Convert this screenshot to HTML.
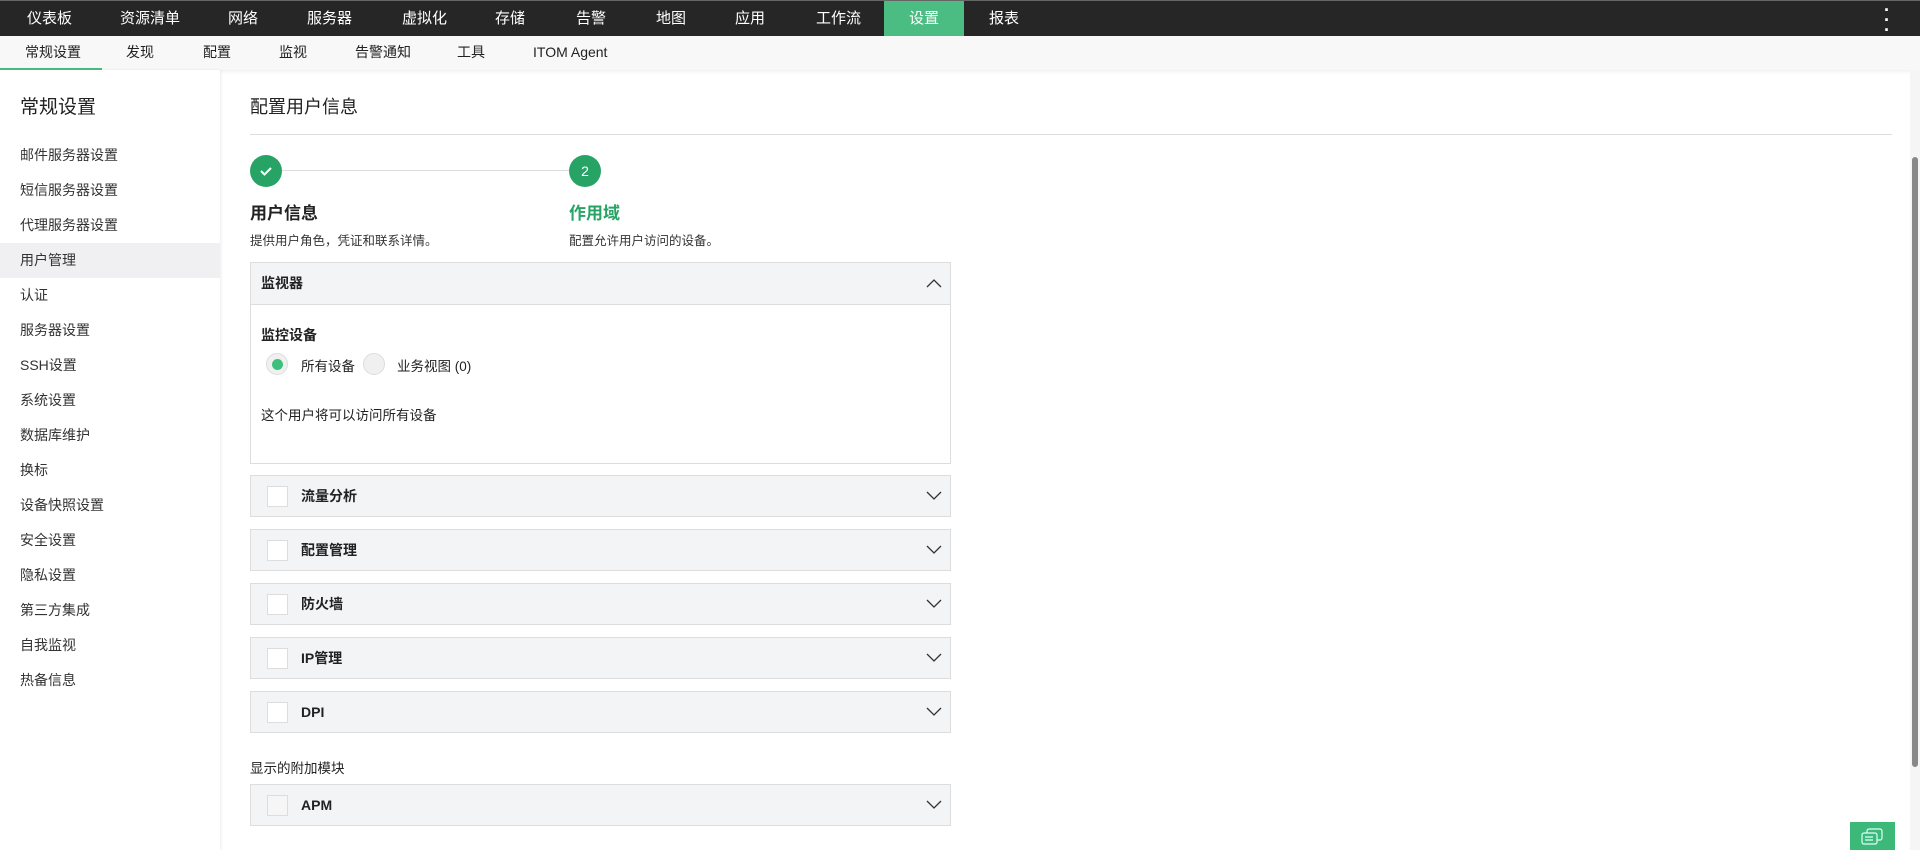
<!DOCTYPE html>
<html><head><meta charset="utf-8"><style>
*{box-sizing:border-box;margin:0;padding:0}
body{width:1920px;height:850px;overflow:hidden;background:#fff;font-family:"Liberation Sans","Noto Sans CJK SC",sans-serif;color:#222;position:relative}
.top{position:absolute;left:0;top:0;width:1920px;height:36px;background:#262626;border-top:1px solid #666}
.top span{position:absolute;top:0;line-height:35px;color:#fff;font-size:15px}
.top .act{background:#4bbd82;width:80px;left:884px;text-align:center}
.sub{position:absolute;left:0;top:36px;width:1920px;height:34px;background:#f8f8f8;box-shadow:0 2px 3px rgba(0,0,0,.06)}
.sub span{position:absolute;top:0;line-height:32px;font-size:14px;color:#222}
.sub .ul{position:absolute;left:0;top:32px;width:102px;height:3px;background:#4bbd82}
.side{position:absolute;left:0;top:70px;width:220px;height:780px;background:#fff;box-shadow:1px 0 3px rgba(0,0,0,.08)}
.side h2{position:absolute;left:20px;top:22px;font-size:19px;font-weight:normal;color:#222}
.side div{position:absolute;left:0;width:220px;height:35px;line-height:35px;padding-left:20px;font-size:14px;color:#333}
.side .sel{background:#f0f0f2}
.h1{position:absolute;left:250px;top:93px;font-size:18px;color:#222}
.hr{position:absolute;left:250px;top:134px;width:1642px;height:1px;background:#ddd}
.circ{position:absolute;width:32px;height:32px;border-radius:50%;background:#27a465;color:#fff;text-align:center;line-height:32px;font-size:14px}
.line{position:absolute;left:282px;top:170px;width:288px;height:1px;background:#ddd}
.st{position:absolute;font-size:17px;font-weight:bold}
.sd{position:absolute;font-size:12.5px;color:#333}
.panel{position:absolute;left:250px;width:701px;border:1px solid #ddd;background:#f3f4f6}
.panel .t{position:absolute;left:50px;top:0;font-size:14px;font-weight:bold}
.panel .cb{position:absolute;left:16px;top:10px;width:21px;height:21px;background:#fff;border:1px solid #ddd}
.chev{position:absolute;left:675px;top:15px;width:16px;height:10px}
.sb{position:absolute;left:1910px;top:70px;width:10px;height:780px;background:#f5f5f5}
.thumb{position:absolute;left:1912px;top:157px;width:6px;height:610px;background:#888;border-radius:3px}
</style></head><body>
<div class="top">
<span style="left:27px">仪表板</span><span style="left:120px">资源清单</span><span style="left:228px">网络</span><span style="left:307px">服务器</span><span style="left:402px">虚拟化</span><span style="left:495px">存储</span><span style="left:576px">告警</span><span style="left:656px">地图</span><span style="left:735px">应用</span><span style="left:816px">工作流</span><span class="act">设置</span><span style="left:989px">报表</span>
<span style="left:1884px;font-size:18px;line-height:10px;top:4px;font-weight:bold">·<br>·<br>·</span>
</div>
<div class="sub">
<span style="left:25px">常规设置</span><span style="left:126px">发现</span><span style="left:203px">配置</span><span style="left:279px">监视</span><span style="left:355px">告警通知</span><span style="left:457px">工具</span><span style="left:533px">ITOM Agent</span>
<div class="ul"></div>
</div>
<div class="side">
<h2>常规设置</h2>
<div style="top:68px">邮件服务器设置</div>
<div style="top:103px">短信服务器设置</div>
<div style="top:138px">代理服务器设置</div>
<div class="sel" style="top:173px">用户管理</div>
<div style="top:208px">认证</div>
<div style="top:243px">服务器设置</div>
<div style="top:278px">SSH设置</div>
<div style="top:313px">系统设置</div>
<div style="top:348px">数据库维护</div>
<div style="top:383px">换标</div>
<div style="top:418px">设备快照设置</div>
<div style="top:453px">安全设置</div>
<div style="top:488px">隐私设置</div>
<div style="top:523px">第三方集成</div>
<div style="top:558px">自我监视</div>
<div style="top:593px">热备信息</div>
</div>
<div class="h1">配置用户信息</div>
<div class="hr"></div>
<div class="line"></div>
<div class="circ" style="left:250px;top:155px"><svg width="14" height="14" viewBox="0 0 14 14" style="margin-top:9px"><path d="M2 7l3.5 3.5L12 4" stroke="#fff" stroke-width="2" fill="none"/></svg></div>
<div class="circ" style="left:569px;top:155px">2</div>
<div class="st" style="left:250px;top:199px">用户信息</div>
<div class="st" style="left:569px;top:199px;color:#27a465">作用域</div>
<div class="sd" style="left:250px;top:230px">提供用户角色，凭证和联系详情。</div>
<div class="sd" style="left:569px;top:230px">配置允许用户访问的设备。</div>

<div class="panel" style="top:262px;height:202px;background:#fff">
<div style="height:42px;background:#f3f4f6;border-bottom:1px solid #ddd;position:relative">
<div style="position:absolute;left:10px;line-height:41px;font-size:14px;font-weight:bold">监视器</div>
<svg class="chev" viewBox="0 0 16 10" style="top:15px"><path d="M1 9L8 2l7 7" stroke="#333" stroke-width="1.3" fill="none"/></svg>
</div>
<div style="position:absolute;left:10px;top:62px;font-size:14px;font-weight:bold">监控设备</div>
<div style="position:absolute;left:15px;top:90px;width:22px;height:22px;border-radius:50%;background:#f0f0f0;border:1px solid #ddd"><div style="width:11px;height:11px;border-radius:50%;background:#3ec07d;margin:4.5px"></div></div>
<div style="position:absolute;left:50px;top:92px;font-size:13.5px">所有设备</div>
<div style="position:absolute;left:112px;top:90px;width:22px;height:22px;border-radius:50%;background:#f0f0f0;border:1px solid #ddd"></div>
<div style="position:absolute;left:146px;top:92px;font-size:13.5px">业务视图 (0)</div>
<div style="position:absolute;left:10px;top:141px;font-size:13.5px">这个用户将可以访问所有设备</div>
</div>

<div class="panel" style="top:475px;height:42px"><div class="cb"></div><div class="t" style="line-height:40px">流量分析</div><svg class="chev" viewBox="0 0 16 10"><path d="M1 1l7 7 7-7" stroke="#333" stroke-width="1.3" fill="none"/></svg></div>
<div class="panel" style="top:529px;height:42px"><div class="cb"></div><div class="t" style="line-height:40px">配置管理</div><svg class="chev" viewBox="0 0 16 10"><path d="M1 1l7 7 7-7" stroke="#333" stroke-width="1.3" fill="none"/></svg></div>
<div class="panel" style="top:583px;height:42px"><div class="cb"></div><div class="t" style="line-height:40px">防火墙</div><svg class="chev" viewBox="0 0 16 10"><path d="M1 1l7 7 7-7" stroke="#333" stroke-width="1.3" fill="none"/></svg></div>
<div class="panel" style="top:637px;height:42px"><div class="cb"></div><div class="t" style="line-height:40px">IP管理</div><svg class="chev" viewBox="0 0 16 10"><path d="M1 1l7 7 7-7" stroke="#333" stroke-width="1.3" fill="none"/></svg></div>
<div class="panel" style="top:691px;height:42px"><div class="cb"></div><div class="t" style="line-height:40px">DPI</div><svg class="chev" viewBox="0 0 16 10"><path d="M1 1l7 7 7-7" stroke="#333" stroke-width="1.3" fill="none"/></svg></div>
<div style="position:absolute;left:250px;top:757px;font-size:13.5px">显示的附加模块</div>
<div class="panel" style="top:784px;height:42px"><div class="cb" style="background:#f6f6f6"></div><div class="t" style="line-height:40px">APM</div><svg class="chev" viewBox="0 0 16 10"><path d="M1 1l7 7 7-7" stroke="#333" stroke-width="1.3" fill="none"/></svg></div>

<div class="sb"></div><div class="thumb"></div>
<div style="position:absolute;left:1850px;top:822px;width:45px;height:28px;background:#3cb878">
<svg width="26" height="22" viewBox="0 0 26 22" style="position:absolute;left:10px;top:6px"><rect x="7" y="1" width="15" height="11" rx="2" fill="none" stroke="#dff" stroke-width="1.2"/><rect x="2" y="5" width="15" height="11" rx="2" fill="#3cb878" stroke="#dff" stroke-width="1.2"/><path d="M5 9h8M5 12h8" stroke="#dff" stroke-width="1.2"/></svg>
</div>
</body></html>
